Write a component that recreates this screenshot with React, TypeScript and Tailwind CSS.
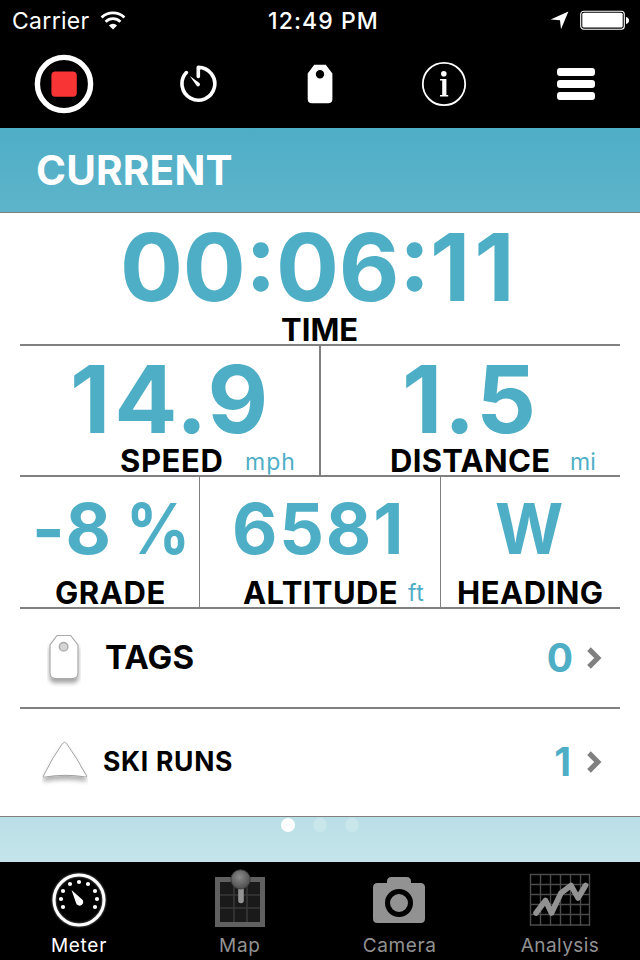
import type { ReactNode } from 'react';

function StatusBar() {
  return (
    <div className="h-10 flex items-center justify-between text-[23px] leading-[40px] text-white relative">
      <div className="flex items-center pl-[12px] gap-[11px]">
        <span className="tracking-[0.3px] pt-px">Carrier</span>
        <svg width="26" height="19" viewBox="0 0 26 19" className="-ml-px">
          <path d="M13 18.6 8.9 14.4a6 6 0 0 1 8.2 0Z" fill="#fff" />
          <path d="M5.6 10.7a10.6 10.6 0 0 1 14.8 0" fill="none" stroke="#fff" strokeWidth="2.8" />
          <path d="M1.6 6.4a16.4 16.4 0 0 1 22.8 0" fill="none" stroke="#fff" strokeWidth="2.8" />
        </svg>
      </div>
      <div className="absolute left-[268px] top-px font-medium tracking-[1.1px]">12:49 PM</div>
      <div className="flex items-center pr-[11px] gap-[11px]">
        <svg width="19" height="19" viewBox="0 0 19 19">
          <path d="M18.4 .5 11 18.2 10 9.2 .6 8.4Z" fill="#fff" />
        </svg>
        <svg width="49" height="20" viewBox="0 0 49 20">
          <rect x=".7" y="1.2" width="43.6" height="18" rx="3" fill="none" stroke="#fff" strokeWidth="1.1" />
          <rect x="2.3" y="2.8" width="40.4" height="14.8" rx="1.5" fill="#fff" />
          <path d="M46 7c4 .6 4 6.4 0 7Z" fill="#fff" />
        </svg>
      </div>
    </div>
  );
}

function Toolbar() {
  return (
    <div className="h-[88px] flex items-center pl-[34px]">
      <svg width="60" height="60" viewBox="0 0 60 60">
        <circle cx="30" cy="30" r="26.6" fill="none" stroke="#fff" strokeWidth="5.4" />
        <rect x="17.4" y="17.4" width="25.4" height="25.4" rx="4" fill="#f93434" />
      </svg>
      <svg width="38" height="38" viewBox="0 0 38 38" className="ml-[85px]">
        <path d="M7.4 7.6a16.4 16.4 0 1 0 11.9-5.2V11.4" fill="none" stroke="#fff" strokeWidth="3.6" strokeLinecap="round" strokeLinejoin="round" />
        <path d="M10.8 10.9 20.4 18a1.9 1.9 0 0 1-2.7 2.7Z" fill="#fff" />
      </svg>
      <svg width="26" height="40" viewBox="0 0 26 40" className="ml-[90px]">
        <path fillRule="evenodd" d="M7.2.8h11.6L25.4 9.5V35q0 4.3-4.3 4.3H5Q.7 39.3.7 35V9.5ZM13 6a4.2 4.2 0 1 0 0 8.4 4.2 4.2 0 0 0 0-8.4Z" fill="#fff" />
      </svg>
      <svg width="46" height="46" viewBox="0 0 46 46" className="ml-[88px]">
        <circle cx="23" cy="23" r="21.2" fill="none" stroke="#fff" strokeWidth="1.8" />
        <circle cx="22.8" cy="12.8" r="2.8" fill="#fff" />
        <path d="M19 18h6.4v16h1.8v1.4H19V34h2.2V19.4H19Z" fill="#fff" />
      </svg>
      <div className="flex flex-col gap-1 ml-[90px]">
        <div className="w-[38px] h-2 rounded-[3px] bg-white" />
        <div className="w-[38px] h-2 rounded-[3px] bg-white" />
        <div className="w-[38px] h-2 rounded-[3px] bg-white" />
      </div>
    </div>
  );
}

function Chevron() {
  return (
    <svg width="15" height="22" viewBox="0 0 15 22">
      <path d="M2 2.2 10.8 11 2 19.8" fill="none" stroke="#808080" strokeWidth="5.2" />
    </svg>
  );
}

function TagIcon() {
  return (
    <svg width="34" height="54" viewBox="0 0 34 54" className="mt-[3px]">
      <defs>
        <filter id="tagShadow" x="-20%" y="-20%" width="140%" height="150%">
          <feDropShadow dx="0" dy="4" stdDeviation="2" floodColor="#000" floodOpacity=".35" />
        </filter>
      </defs>
      <path d="M10 2.5h13.5L31 12v28q0 5.5-5.5 5.5h-17Q3 45.5 3 40V12Z" fill="#fff" stroke="#aaa" strokeWidth="1.2" filter="url(#tagShadow)" />
      <circle cx="16.6" cy="13.8" r="4.3" fill="#d5d5d5" stroke="#aaa" strokeWidth="1.4" />
    </svg>
  );
}

function SlopeIcon() {
  return (
    <svg width="46" height="46" viewBox="0 0 46 46" className="mt-[2px]">
      <defs>
        <filter id="slopeShadow" x="-10%" y="-20%" width="120%" height="150%">
          <feDropShadow dx="0" dy="4" stdDeviation="2" floodColor="#000" floodOpacity=".3" />
        </filter>
      </defs>
      <path d="M1.3 36.2Q10 18 20.5 3.5 22.5.8 24.5 3.5 35 18 44.5 35.8 45 37 43.8 37 23 33.5 1.8 37.2.9 37.2 1.3 36.2Z" fill="#fff" stroke="#999" strokeWidth=".9" filter="url(#slopeShadow)" />
    </svg>
  );
}

function MeterIcon() {
  const dots = [[15, 35], [13, 27], [15, 19], [22, 12], [31, 10], [40, 12], [47, 19], [49, 27], [47, 35]];
  return (
    <svg width="62" height="60" viewBox="0 0 62 60" className="shrink-0">
      <defs>
        <filter id="glow" x="-20%" y="-20%" width="140%" height="140%">
          <feDropShadow dx="0" dy="0" stdDeviation="1" floodColor="#fff" floodOpacity=".6" />
        </filter>
      </defs>
      <circle cx="31" cy="28" r="25" fill="none" stroke="#fff" strokeWidth="3" filter="url(#glow)" />
      {dots.map(([x, y]) => <circle key={`${x}-${y}`} cx={x} cy={y} r="2.1" fill="#fff" />)}
      <path d="M23.5 18 33.6 26.9a3.7 3.7 0 1 1-5.7 3.7Z" fill="#fff" />
    </svg>
  );
}

function MapIcon() {
  return (
    <svg width="62" height="60" viewBox="0 0 62 60" className="shrink-0 overflow-visible">
      <defs>
        <radialGradient id="pinHead" cx="45%" cy="38%" r="60%">
          <stop offset="0" stopColor="#8a8a8a" />
          <stop offset="1" stopColor="#505050" />
        </radialGradient>
      </defs>
      <rect x="9.5" y="7.5" width="45" height="45" fill="#1a1a1a" stroke="#606060" strokeWidth="5" />
      <path d="M26 10v40M39 10v40M12 23h40M12 36h40" stroke="#383838" strokeWidth="1.6" />
      <path d="M33 15v13.5" stroke="#949494" strokeWidth="5.6" strokeLinecap="round" />
      <circle cx="32.5" cy="7.4" r="9.6" fill="url(#pinHead)" stroke="#3c3c3c" strokeWidth="1" />
    </svg>
  );
}

function CameraIcon() {
  return (
    <svg width="62" height="60" viewBox="0 0 62 60" className="shrink-0">
      <path d="M18 11V9.5Q18 5 22.5 5h15Q42 5 42 9.5V11h9.500Q56 11 56 15.500v31Q56 51 51.500 51h-43Q4 51 4 46.500v-31Q4 11 8.500 11Z" fill="#929292" />
      <circle cx="30" cy="31" r="11.5" fill="#929292" stroke="#000" strokeWidth="5" />
    </svg>
  );
}

function AnalysisIcon() {
  return (
    <svg width="62" height="60" viewBox="0 0 62 60" className="shrink-0">
      <path d="M1.5 2v52M11.5 2v52M21.5 2v52M31.5 2v52M41.5 2v52M51.5 2v52M60.5 2v52M1 2.5h60M1 12.5h60M1 22.5h60M1 32.5h60M1 42.5h60M1 53h60" stroke="#4a4a4a" strokeWidth="1.4" />
      <path d="M7 41 16.5 28.5 22.5 41 32 21 42 13.5 49 26 56.5 13.5" fill="none" stroke="#929292" strokeWidth="5.6" strokeLinecap="round" strokeLinejoin="round" />
    </svg>
  );
}

const tabs = [
  { label: 'Meter', icon: MeterIcon, color: 'text-white', spacing: 'tracking-[0.7px]' },
  { label: 'Map', icon: MapIcon, color: 'text-[#929292]', spacing: 'tracking-[0.7px] pl-px' },
  { label: 'Camera', icon: CameraIcon, color: 'text-[#929292]', spacing: 'tracking-[0.6px]' },
  { label: 'Analysis', icon: AnalysisIcon, color: 'text-[#929292]', spacing: 'tracking-[0.4px]' },
];

const valueStyle = "block font-bold text-[#4eaec6] whitespace-pre";
const labelStyle = "font-bold text-black text-[31px]";
const unitStyle = "text-[23px] text-[#4eaec6] pt-px";

function Row({ icon, children, className }: { icon: ReactNode; children: ReactNode; className: string }) {
  return (
    <div className={`flex items-center ${className}`}>
      {icon}
      {children}
      <Chevron />
    </div>
  );
}

export default function App() {
  return (
    <div className="w-[640px] h-[960px] flex flex-col overflow-hidden bg-black font-['Inter',sans-serif]">
      <StatusBar />
      <Toolbar />

      <div className="h-[84px] pl-[36px] bg-linear-to-b from-[#4eaec6] to-[#5db4ca] text-white text-[40.5px] leading-[86px] font-bold tracking-[0.2px]">
        CURRENT
      </div>

      <div className="h-[605px] border-y border-[#808080] bg-white px-5">
        <div className="h-[133px] border-b-2 border-[#808080]">
          <span className={`${valueStyle} pl-[100px] text-[93.5px] leading-[108px] tracking-[-0.4px] [font-feature-settings:'case','calt']`}>
            00:06:<span className="tracking-[4px]">11</span>
          </span>
          <span className={`${labelStyle} block pl-[261px] leading-[17px]`}>TIME</span>
        </div>

        <div className="h-[131px] flex border-b-2 border-[#808080]">
          <div className="w-[301px] border-r-2 border-[#808080]">
            <span className={`${valueStyle} pl-[50px] text-[93.5px] leading-[106px] tracking-[1.5px]`}>
              <span className="tracking-[4px]">1</span>4.9
            </span>
            <div className="flex pl-[100px] leading-[18px]">
              <span className={`${labelStyle} w-[125px] tracking-[0.6px]`}>SPEED</span>
              <span className={`${unitStyle} tracking-[1px]`}>mph</span>
            </div>
          </div>
          <div>
            <span className={`${valueStyle} pl-[81px] text-[93.5px] leading-[106px] tracking-[1.7px]`}>1.5</span>
            <div className="flex pl-[69px] leading-[18px]">
              <span className={`${labelStyle} w-[180px] tracking-[0.3px]`}>DISTANCE</span>
              <span className={unitStyle}>mi</span>
            </div>
          </div>
        </div>

        <div className="h-[132px] flex border-b-2 border-[#808080]">
          <div className="w-[180px] border-r border-[#808080]">
            <span className={`${valueStyle} pl-[12px] text-[70px] leading-[103px]`}>
              <span className="tracking-[0.8px]">-8</span>
              <span className="inline-block ml-[14px] origin-left scale-x-[0.9]">%</span>
            </span>
            <span className={`${labelStyle} block pl-[35px] leading-[25px] tracking-[0.6px]`}>GRADE</span>
          </div>
          <div className="w-[241px] border-r border-[#808080]">
            <span className={`${valueStyle} pl-[32px] text-[70px] leading-[103px] tracking-[1.8px]`}>6581</span>
            <div className="flex pl-[43px] leading-[25px]">
              <span className={`${labelStyle} w-[165px] tracking-[0.4px]`}>ALTITUDE</span>
              <span className={`${unitStyle} tracking-[0.5px]`}>ft</span>
            </div>
          </div>
          <div>
            <span className={`${valueStyle} pl-[54px] text-[70px] leading-[103px] origin-[54px_50%] scale-x-[0.94]`}>W</span>
            <span className={`${labelStyle} block pl-[16px] leading-[25px] tracking-[0.5px]`}>HEADING</span>
          </div>
        </div>

        <Row icon={<TagIcon />} className="h-[100px] pl-[27px] pr-[18px] border-b-2 border-[#808080]">
          <span className="ml-[24px] text-[33px] font-bold tracking-[0.1px]">TAGS</span>
          <span className="ml-auto mr-[14px] text-[39px] font-bold text-[#4eaec6]">0</span>
        </Row>
        <Row icon={<SlopeIcon />} className="h-[107px] pl-[22px] pr-[18px] pb-[2px]">
          <span className="ml-[15px] text-[26.5px] font-bold tracking-[0.7px]">SKI RUNS</span>
          <span className="ml-auto mr-[16px] pt-px text-[39px] font-bold text-[#4eaec6]">1</span>
        </Row>
      </div>

      <div className="h-[45px] bg-linear-to-b from-[#bbdfe7] to-[#c3e4ea] flex justify-center gap-[18px] pt-px">
        <div className="size-[14px] rounded-full bg-white" />
        <div className="size-[14px] rounded-full bg-[#c9e6eb]" />
        <div className="size-[14px] rounded-full bg-[#c9e6eb]" />
      </div>

      <div className="h-[98px] flex justify-between pl-[48px] pr-[49px] pt-[10px]">
        {tabs.map((tab) => (
          <div key={tab.label} className={`w-[62px] flex flex-col items-center ${tab.color}`}>
            <tab.icon />
            <span className={`text-[19px] leading-[28px] ${tab.spacing}`}>{tab.label}</span>
          </div>
        ))}
      </div>
    </div>
  );
}
